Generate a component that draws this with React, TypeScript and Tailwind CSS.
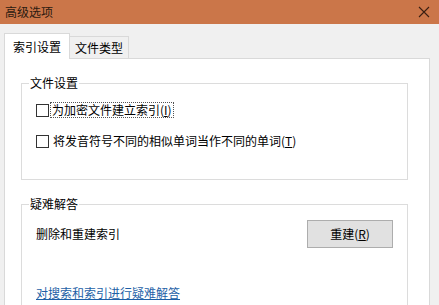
import React from "react";

const font = { fontFamily: '"Noto Sans CJK SC", "Noto Sans", sans-serif' };

function Check({ children }: { children: React.ReactNode }) {
  return (
    <div className="flex items-center h-[16px]">
      <span className="w-[13px] h-[13px] border border-[#333] bg-white shrink-0" />
      <span className="ml-[3px] px-[1px] leading-[16px]">{children}</span>
    </div>
  );
}

export default function App() {
  return (
    <div
      className="w-[439px] h-[305px] overflow-hidden bg-[#f0f0f0] text-[12px] text-black flex flex-col"
      style={font}
    >
      {/* title bar */}
      <div className="h-[24px] bg-[#cb7649] flex items-center justify-between shrink-0">
        <span className="ml-[5px] text-[12px] text-[#2b1a10] leading-[16px]">高级选项</span>
        <svg width="12" height="12" viewBox="0 0 12 12" className="mr-[9px]">
          <path d="M1 1L11 11M11 1L1 11" stroke="#3a1f12" strokeWidth="1.1" />
        </svg>
      </div>

      {/* tabs */}
      <div className="flex items-end h-[34px] pl-[4px] shrink-0 relative z-10">
        <div className="h-[26px] px-[8px] bg-white border border-[#d9d9d9] border-b-0 flex items-center -mb-[1px] leading-[16px]">
          索引设置
        </div>
        <div className="h-[22px] px-[5px] bg-[#f0f0f0] border border-[#d9d9d9] border-l-0 border-b-0 flex items-center leading-[16px]">
          文件类型
        </div>
      </div>

      {/* panel */}
      <div className="ml-[4px] w-[426px] flex-1 bg-white border border-[#d9d9d9] pl-[16px]">
        <fieldset className="mt-[16px] w-[387px] h-[105px] border border-[#dcdcdc]">
          <legend className="ml-[7px] px-[1px] leading-[16px]">文件设置</legend>
          <div className="pl-[14px] pt-[11px] flex flex-col gap-[15px]">
            <div className="flex items-center h-[16px]">
              <span className="w-[13px] h-[13px] border border-[#333] bg-white shrink-0" />
              <span className="ml-[2px] px-[1px] leading-[14px] outline outline-1 outline-dotted outline-[#555]">
                为加密文件建立索引(<span className="underline">I</span>)
              </span>
            </div>
            <Check>
              将发音符号不同的相似单词当作不同的单词(<span className="underline">T</span>)
            </Check>
          </div>
        </fieldset>

        <fieldset className="mt-[16px] w-[387px] h-[140px] border border-[#dcdcdc]">
          <legend className="ml-[7px] px-[1px] leading-[16px]">疑难解答</legend>
          <div className="flex items-center justify-between pl-[14px] pr-[14px] mt-[8px]">
            <span className="leading-[16px]">删除和重建索引</span>
            <button className="w-[86px] h-[28px] bg-[#e1e1e1] border border-[#adadad] leading-[16px]">
              重建(<span className="underline">R</span>)
            </button>
          </div>
          <div className="pl-[14px] mt-[36px]">
            <span className="text-[#1d5fa6] underline leading-[16px]">对搜索和索引进行疑难解答</span>
          </div>
        </fieldset>
      </div>
    </div>
  );
}
